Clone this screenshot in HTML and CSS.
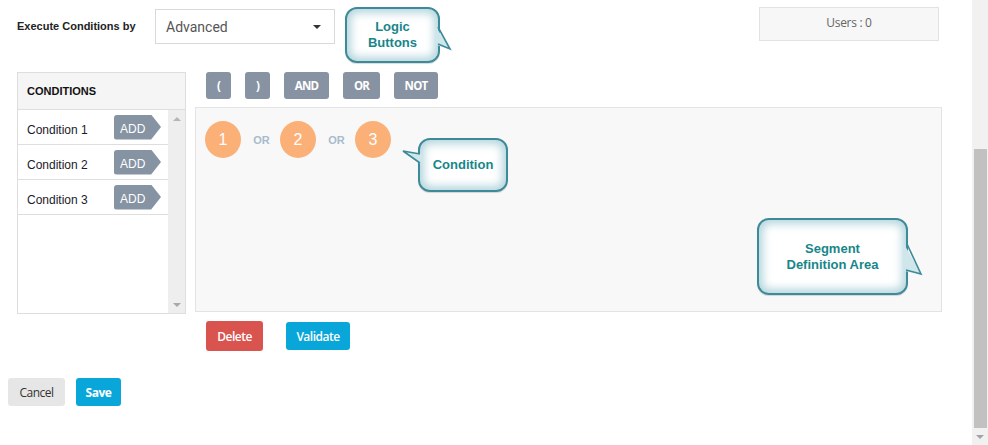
FILE: index.html
```html
<!DOCTYPE html>
<html>
<head>
<meta charset="utf-8">
<link rel="stylesheet" href="styles.css">
</head>
<body>
<div class="page">
  <div class="main">
    <div class="toprow">
      <div class="exec-label">Execute Conditions by</div>
      <div class="select"><span class="select-text">Advanced</span><span class="caret"></span></div>
      <div class="callout callout-logic">
        <span>Logic<br>Buttons</span>
        <svg class="tail tail-logic" width="18" height="30" viewBox="0 0 18 30"><polygon points="1,4 15,26 1,22" fill="#cfe7eb"/><polyline points="3,4 15,26 3,21" fill="none" stroke="#3d8b9a" stroke-width="1.6"/></svg>
      </div>
      <div class="users">Users : 0</div>
    </div>

    <div class="workrow">
      <div class="cond-panel">
        <div class="cond-head">CONDITIONS</div>
        <div class="cond-body">
          <div class="cond-list">
            <div class="cond-row"><span class="cond-name">Condition 1</span><span class="add">ADD</span></div>
            <div class="cond-row"><span class="cond-name">Condition 2</span><span class="add">ADD</span></div>
            <div class="cond-row"><span class="cond-name">Condition 3</span><span class="add">ADD</span></div>
          </div>
          <div class="mini-scroll"><span class="arr-up"></span><span class="arr-down"></span></div>
        </div>
      </div>

      <div class="editor">
        <div class="logic-btns">
          <span class="lbtn">(</span>
          <span class="lbtn">)</span>
          <span class="lbtn">AND</span>
          <span class="lbtn">OR</span>
          <span class="lbtn">NOT</span>
        </div>
        <div class="segment">
          <div class="expr">
            <span class="node">1</span><span class="op">OR</span><span class="node">2</span><span class="op">OR</span><span class="node">3</span>
          </div>
          <div class="callout callout-cond">
            <span>Condition</span>
            <svg class="tail tail-cond" width="22" height="20" viewBox="0 0 22 20"><polygon points="2,3 21,6 21,17" fill="#cfe7eb"/><polyline points="19,6 2,3 19,15" fill="none" stroke="#3d8b9a" stroke-width="1.6"/></svg>
          </div>
          <div class="callout callout-seg">
            <span>Segment<br>Definition Area</span>
            <svg class="tail tail-seg" width="24" height="38" viewBox="0 0 24 38"><polygon points="2,4 19,34 2,31" fill="#cfe7eb"/><polyline points="5,4 19,34 4,30" fill="none" stroke="#3d8b9a" stroke-width="1.6"/></svg>
          </div>
        </div>
        <div class="seg-actions">
          <button class="btn btn-delete">Delete</button>
          <button class="btn btn-blue btn-validate">Validate</button>
        </div>
      </div>
    </div>

    <div class="footer">
      <button class="btn btn-cancel">Cancel</button>
      <button class="btn btn-blue btn-save">Save</button>
    </div>
  </div>
  <div class="scrollbar">
    <div class="thumb"></div>
    <div class="sb-down"></div>
  </div>
</div>
</body>
</html>
```

FILE: styles.css
```css
* { box-sizing: border-box; }
html, body { margin: 0; padding: 0; background: #fff; }
body { font-family: "Liberation Sans", Arial, sans-serif; color: #222; overflow: hidden; }

.page { display: flex; width: 988px; height: 445px; }
.main { flex: 1; min-width: 0; }

/* top row */
.toprow { display: flex; align-items: flex-start; height: 72px; padding-left: 17px; }
.exec-label { width: 138px; margin-top: 9px; line-height: 35px; font-size: 11px; font-weight: bold; color: #222; }
.select {
  margin-top: 9px; width: 180px; height: 35px; border: 1px solid #d9d9d9; background: #fff;
  display: flex; align-items: center; padding-left: 10px;
}
.select-text { font-family: Roboto, "Liberation Sans", sans-serif; font-size: 14px; color: #555; }
.caret {
  margin-left: auto; margin-right: 13px; width: 0; height: 0;
  border-left: 4px solid transparent; border-right: 4px solid transparent; border-top: 4px solid #333;
}

.callout {
  position: relative; border: 2px solid #3d8b9a; border-radius: 12px; background: #fff;
  box-shadow: inset 0 0 9px 4px rgba(90, 165, 180, 0.45), 0 1px 1px rgba(0,0,0,0.15);
  display: flex; align-items: center; justify-content: center; text-align: center;
  color: #17868a; font-weight: bold; font-size: 13px; line-height: 16px;
}
.tail { position: absolute; overflow: visible; }
.callout-logic { margin-top: 7px; margin-left: 10px; width: 95px; height: 56px; }
.tail-logic { left: 88px; top: 14px; }

.users {
  margin-left: auto; margin-right: 33px; margin-top: 7px; width: 180px; height: 34px;
  background: #f7f7f7; border: 1px solid #e2e2e2;
  display: flex; align-items: center; justify-content: center;
  font-family: "Open Sans", sans-serif; font-size: 12px; letter-spacing: -0.3px; color: #666; padding-bottom: 4px;
}

/* work row */
.workrow { display: flex; align-items: flex-start; }
.cond-panel { margin-left: 17px; width: 169px; height: 242px; border: 1px solid #dedede; display: flex; flex-direction: column; }
.cond-head { height: 37px; background: #f5f5f5; border-bottom: 1px solid #dedede; padding-left: 9px; display: flex; align-items: center; font-size: 11px; font-weight: bold; color: #111; }
.cond-body { flex: 1; display: flex; }
.cond-list { width: 150px; }
.cond-row { height: 35px; border-bottom: 1px solid #dedede; display: flex; align-items: center; padding-left: 9px; font-size: 12px; color: #1a1a2a; }
.cond-name { padding-top: 5px; }
.add {
  margin-left: auto; margin-right: 7px; width: 47px; height: 25px; background: #8593a3; color: #fff;
  border-radius: 3px 0 0 3px; font-size: 12px; padding-left: 6px; padding-top: 5px; line-height: 18px;
  clip-path: polygon(0 0, 79% 0, 100% 50%, 79% 100%, 0 100%);
}
.mini-scroll { width: 17px; background: #eeeeee; display: flex; flex-direction: column; justify-content: space-between; align-items: center; padding: 7px 0 6px; }
.arr-up { width: 0; height: 0; border-left: 4px solid transparent; border-right: 4px solid transparent; border-bottom: 4px solid #b5b5b5; }
.arr-down { width: 0; height: 0; border-left: 4px solid transparent; border-right: 4px solid transparent; border-top: 4px solid #a8a8a8; }

.editor { margin-left: 9px; width: 747px; }
.logic-btns { display: flex; gap: 14px; padding-left: 11px; height: 27px; }
.lbtn {
  min-width: 25px; height: 27px; padding: 0 9px; background: #8793a3; border-radius: 3px; color: #fff;
  font-family: "Open Sans", sans-serif; font-weight: bold; font-size: 11.5px; letter-spacing: -0.8px;
  display: flex; align-items: center; justify-content: center;
}
.lbtn:nth-child(3) { width: 45px; }
.lbtn:nth-child(4) { width: 37px; }
.lbtn:nth-child(5) { width: 44px; }

.segment { position: relative; margin-top: 8px; height: 205px; border: 1px solid #e3e3e3; background: #f8f8f8; }
.expr { display: flex; align-items: center; padding: 13px 0 0 9px; }
.node { width: 36px; height: 37px; border-radius: 50%; background: #fbb077; color: #fff; font-size: 16px; display: flex; align-items: center; justify-content: center; }
.op { width: 39px; text-align: center; font-size: 11px; font-weight: bold; color: #a7bbcc; padding-left: 2px; }

.callout-cond { position: absolute; left: 222px; top: 30px; width: 90px; height: 54px; }
.tail-cond { left: -19px; top: 8px; }
.callout-seg { position: absolute; left: 561px; top: 110px; width: 151px; height: 77px; }
.tail-seg { left: 143px; top: 20px; }

.seg-actions { display: flex; align-items: center; gap: 23px; padding-left: 11px; margin-top: 9px; }
.btn {
  border: 0; border-radius: 3px; color: #fff; font-family: "Open Sans", sans-serif; font-size: 12px;
  letter-spacing: -0.5px; padding: 0; display: flex; align-items: center; justify-content: center; cursor: pointer;
}
.btn-delete { width: 57px; height: 30px; background: #d9534f; font-weight: 600; }
.btn-blue { background: #08a6d9; font-weight: 600; }
.btn-validate { width: 64px; height: 28px; }

.footer { display: flex; gap: 11px; padding-left: 8px; margin-top: 27px; }
.btn-cancel { width: 57px; height: 28px; background: #e6e6e6; color: #333; font-weight: normal; }
.btn-save { width: 45px; height: 28px; font-weight: bold; }

/* page scrollbar */
.scrollbar { width: 16px; background: #f1f1f1; display: flex; flex-direction: column; align-items: flex-end; }
.thumb { margin-top: 149px; width: 13px; height: 279px; background: #c1c1c1; margin-right: 1px; }
.sb-down { margin-top: 7px; margin-right: 4px; width: 0; height: 0; border-left: 4px solid transparent; border-right: 4px solid transparent; border-top: 4px solid #a3a3a3; }
```
